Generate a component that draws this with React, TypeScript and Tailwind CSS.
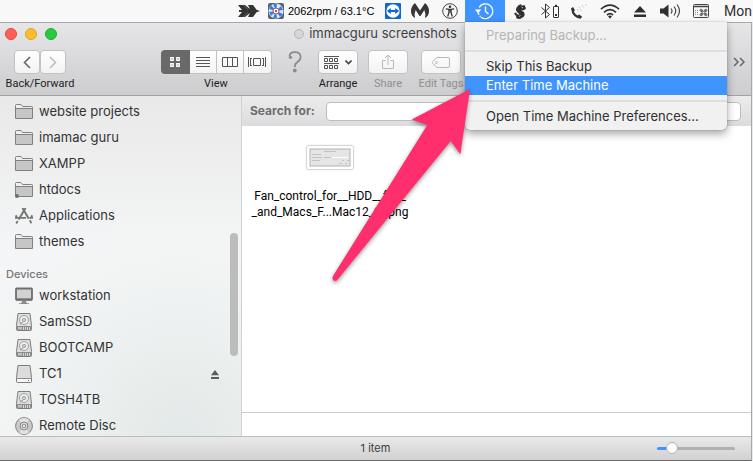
import React from "react";

type IconProps = { children: React.ReactNode; w: number; h: number; className?: string };

function Svg({ children, w, h, className = "" }: IconProps) {
  return (
    <svg width={w} height={h} viewBox={`0 0 ${w} ${h}`} fill="none" className={`shrink-0 ${className}`} aria-hidden="true">
      {children}
    </svg>
  );
}

function FolderIcon({ badge = false }: { badge?: boolean }) {
  return (
    <Svg w={18} h={16}>
      <path d="M.5 14.5V1.500Q.5.500 1.500.500H6l1.600 2h9.100q.8 0 .8.8v11.200z" fill="#eeeeee" stroke="#808080" />
      <path d="M1 5h16v9H1z" fill="#c6c6c6" />
      <path d="M.5 4.500h17" stroke="#808080" />
      {badge && <circle cx="2" cy="14" r="1.900" fill="#6c6c6c" />}
    </Svg>
  );
}

function AppsIcon() {
  return (
    <Svg w={18} h={16}>
      <path d="M7.500 0l6.300 10.800M10.500 0L3.700 11.500" stroke="#757575" strokeWidth="2" />
      <path d="M0 9.800h11M14.500 9.800H18M14.700 12.300l1.800 3M2.700 13l-1.500 2.500M.5 7.500l1.500 1.500M17.500 7.500L16 9" stroke="#757575" strokeWidth="1.800" />
    </Svg>
  );
}

function MonitorIcon() {
  return (
    <Svg w={18} h={18}>
      <rect x="1" y="1.500" width="16" height="11" rx=".6" fill="#d2d2d2" stroke="#6f6f6f" strokeWidth="1.800" />
      <path d="M1 12.700h16" stroke="#6f6f6f" strokeWidth="2" />
      <path d="M7 14h4l.7 2.300H14V17H4v-.7h2.400z" fill="#8b8b8b" />
    </Svg>
  );
}

function DriveIcon() {
  return (
    <Svg w={18} h={18}>
      <path d="M3 .5h12l1.500 12v4q0 1-1 1h-13q-1 0-1-1v-4z" fill="#dedede" stroke="#7d7d7d" />
      <path d="M1.500 13h15v4h-15z" fill="#8d8d8d" />
      <path d="M8.500 14v3M10.500 14v3M12.500 14v3M14.500 14v3" stroke="#d6d6d6" />
      <path d="M3 14h4v2.500H3z" fill="#c2c2c2" />
      <circle cx="9" cy="7" r="4.500" fill="#ededed" stroke="#a0a0a0" />
      <circle cx="9" cy="7" r="1.500" stroke="#929292" />
      <path d="M5 11l3-2" stroke="#929292" />
    </Svg>
  );
}

function CapsuleIcon() {
  return (
    <Svg w={18} h={18}>
      <path d="M3 .5h12l1.500 12v4q0 1-1 1h-13q-1 0-1-1v-4z" fill="#dcdcdc" stroke="#7d7d7d" />
      <path d="M2 14h14v3H2z" fill="#f6f6f6" />
      <path d="M1.500 13.500h15" stroke="#8d8d8d" />
      <path d="M13 15.500h1" stroke="#666" />
    </Svg>
  );
}

function DiscIcon() {
  return (
    <Svg w={18} h={18}>
      <circle cx="9" cy="9" r="8.400" fill="#cacaca" stroke="#7f7f7f" />
      <path d="M9 9L4 2.500Q9-.5 14 2.500zM9 9L4 15.500Q9 18.500 14 15.500z" fill="#e3e3e3" />
      <circle cx="9" cy="9" r="4" fill="#d9d9d9" stroke="#8a8a8a" />
      <circle cx="9" cy="9" r="1.800" fill="#eee" stroke="#8a8a8a" />
    </Svg>
  );
}

function EjectIcon({ small = false }: { small?: boolean }) {
  return (
    <svg width={small ? 8 : 12} height={small ? 9 : 11} viewBox="0 0 12 11" preserveAspectRatio="none" aria-hidden="true">
      <path d="M6 0l6 6.500H0zM0 8.500h12V11H0z" fill={small ? "#5c5c5c" : "#2f2f2f"} />
    </svg>
  );
}

const favourites = [
  { name: "website projects", icon: <FolderIcon /> },
  { name: "imamac guru", icon: <FolderIcon /> },
  { name: "XAMPP", icon: <FolderIcon /> },
  { name: "htdocs", icon: <FolderIcon badge /> },
  { name: "Applications", icon: <AppsIcon /> },
  { name: "themes", icon: <FolderIcon /> },
];

const devices = [
  { name: "workstation", icon: <MonitorIcon /> },
  { name: "SamSSD", icon: <DriveIcon /> },
  { name: "BOOTCAMP", icon: <DriveIcon /> },
  { name: "TC1", icon: <CapsuleIcon />, eject: true },
  { name: "TOSH4TB", icon: <DriveIcon /> },
  { name: "Remote Disc", icon: <DiscIcon /> },
];

function SidebarRow({ name, icon, eject }: { name: string; icon: React.ReactNode; eject?: boolean }) {
  return (
    <li className="flex h-[26px] items-center pr-[22px] pl-[15px]">
      <button className="flex min-w-0 flex-1 items-center gap-[6px] text-left">
        {icon}
        <span>{name}</span>
      </button>
      {eject && (
        <button aria-label={`Eject ${name}`}>
          <EjectIcon small />
        </button>
      )}
    </li>
  );
}

function MenuSeparator() {
  return (
    <div role="separator" className="flex h-3 items-center">
      <div className="h-[2px] w-full bg-[#dedede]" />
    </div>
  );
}

function TimeMachineMenu() {
  return (
    <div role="menu" className="absolute top-full left-0 z-20 w-[262px] rounded-b-[5px] bg-[#f1f1f1] py-1 font-[Inter,sans-serif] text-[13px] leading-[19px] text-[#303030] shadow-[0_4px_9px_rgba(0,0,0,0.35),0_0_1px_rgba(0,0,0,0.5)]">
      <button role="menuitem" disabled className="block w-full px-[21px] text-left text-[#b5b5b5]">Preparing Backup...</button>
      <MenuSeparator />
      <button role="menuitem" className="block w-full px-[21px] text-left">Skip This Backup</button>
      <button role="menuitem" className="block w-full bg-[#4094ff] px-[21px] text-left text-white">Enter Time Machine</button>
      <MenuSeparator />
      <button role="menuitem" className="block w-full px-[21px] text-left whitespace-nowrap">Open Time Machine Preferences...</button>
    </div>
  );
}

const cell = "flex h-full shrink-0 items-center justify-center";

function MenuBar() {
  return (
    <header className="flex h-[22px] items-center justify-end bg-[#f8f8f8]">
      <button aria-label="Arrow" className={`${cell} w-[31px]`}>
        <Svg w={22} h={14}>
          <path d="M0 1h7l5 4-2-4h5l3.500 4.700L22 7l-3.500 1.300L15 13h-5l2-4-5 4H0l4-5H1V6h3z" fill="#333" />
          <path d="M5 1l5 4.500M5 13l5-4.500" stroke="#777" strokeWidth=".6" />
        </Svg>
      </button>
      <button className="flex h-full shrink-0 items-center">
        <span className={`${cell} w-6`}>
          <Svg w={16} h={16}>
            <rect width="16" height="16" rx="2" fill="#5e6066" />
            <circle cx="8" cy="8" r="7.500" fill="#dcecff" />
            <path d="M8 8L5 1h4zM8 8l5-5 2 4zM8 8l7 3-3 3zM8 8l1 7H5zM8 8l-5 5-2-4zM8 8L1 6l2-4z" fill="#2f83e6" />
            <circle cx="8" cy="8" r="3" fill="#fff" stroke="#c44" />
            <circle cx="8" cy="8" r="1" fill="#444" />
          </Svg>
        </span>
        <span className="w-[92px] text-left font-['Liberation_Sans',sans-serif] text-[11px] whitespace-nowrap text-black">2062rpm / 63.1°C</span>
      </button>
      <button aria-label="Remote control" className={`${cell} w-[25px]`}>
        <Svg w={16} h={16}>
          <rect width="16" height="16" rx="1" fill="#0d67d8" />
          <circle cx="8" cy="8" r="6.700" fill="#fff" />
          <path d="M1.800 8l4-3v2h4.400V5l4 3-4 3V9H5.800v2z" fill="#0d67d8" />
        </Svg>
      </button>
      <button aria-label="Malware scanner" className={`${cell} w-[30px]`}>
        <Svg w={18} h={16}>
          <path d="M4 0L9 7.500 14 0q4 3.500 4 8 0 5-4 7 1.300-4-.7-8L9.500 13h-1L4.700 7q-2 4-.7 8-4-2-4-7 0-4.500 4-8z" fill="#363636" />
        </Svg>
      </button>
      <button aria-label="Accessibility" className={`${cell} w-[30px]`}>
        <Svg w={16} h={16}>
          <circle cx="8" cy="8" r="7.300" stroke="#444" />
          <circle cx="8" cy="3.700" r="1.300" fill="#333" />
          <path d="M3.800 5.800L7 6.300h2l3.200-.5M8 6v3.500" stroke="#333" strokeWidth="1.300" />
          <path d="M7 6v3.500l-1.300 4M9 6v3.500l1.300 4" stroke="#333" strokeWidth="1.300" />
        </Svg>
      </button>
      <div className="relative h-full shrink-0">
        <button aria-label="Time Machine" className={`${cell} w-10 bg-[#4094ff]`}>
          <Svg w={20} h={18}>
            <path d="M4.100 5.300A7.400 7.400 0 1 1 6 15.200" stroke="#fff" strokeWidth="1.300" />
            <path d="M3.100 8.200a7.500 7.500 0 0 0 2.500 6.500" stroke="#fff" strokeWidth="1.500" strokeDasharray="1.500 1.500" />
            <path d="M0 7.500h6.300L3 11.500z" fill="#fff" />
            <path d="M10.500 4.500v5l3 2.500" stroke="#fff" strokeWidth="1.300" />
          </Svg>
        </button>
        <TimeMachineMenu />
      </div>
      <button aria-label="Scripts" className={`${cell} w-[29px]`}>
        <Svg w={12} h={15}>
          <path d="M3 3Q4.500.5 7 .2l1 1.600L10.500 1 12 4.500Q10 7 7 6.500l3 1.500q1.500 2.500-.5 5L6 15l-3.500-.5L2 12 0 9.500l1.500-1L4 10.800l1.500-.5L3 8Q1 5.500 3 3z" fill="#303030" />
          <path d="M7.500 3l1.500 1M5 12.500l1.500-1" stroke="#f8f8f8" strokeWidth=".7" />
        </Svg>
      </button>
      <button aria-label="Bluetooth" className={`${cell} w-[31px]`}>
        <Svg w={18} h={16}>
          <path d="M.5 4.500l8 7-4 3.500V1l4 3.500-8 7" stroke="#333" />
          <rect x="12.500" y="3.500" width="5" height="11" rx=".5" stroke="#333" />
          <path d="M14 2.500h2" stroke="#333" strokeWidth="1.500" />
          <path d="M14 11h2v2h-2z" fill="#333" />
        </Svg>
      </button>
      <button aria-label="Phone" className={`${cell} w-[29px]`}>
        <Svg w={17} h={16}>
          <path d="M0 5.500L2 4l2 3.300L2.800 8.500q1.200 2.500 3.700 4l1.700-1 3 2.200-1.700 2Q1 14.500 0 5.500z" fill="#333" />
          <path d="M6 6l2 3M8 4l2.500 4M11 2l2 3M14 1l2 2" stroke="#bbb" strokeDasharray="1 1" />
        </Svg>
      </button>
      <button aria-label="Wi-Fi" className={`${cell} w-[31px]`}>
        <Svg w={20} h={15}>
          <path d="M1 5.200q9-8 18 0M4 8.300q6-5.500 12 0M7 11q3-2.600 6 0" stroke="#303030" strokeWidth="1.700" />
          <path d="M8 12.300q2-1.500 4 0l-2 2.500z" fill="#303030" />
        </Svg>
      </button>
      <button aria-label="Eject" className={`${cell} w-[30px]`}>
        <EjectIcon />
      </button>
      <button aria-label="Volume" className={`${cell} w-[31px]`}>
        <Svg w={21} h={14}>
          <path d="M0 4.500h3.500L8.500.5v13L3.500 9.500H0z" fill="#303030" />
          <path d="M11 4.500q2 2.500 0 5M14 2.500q3.500 4.500 0 9M17 .5q5 6.500 0 13" stroke="#444" strokeWidth="1.200" />
        </Svg>
      </button>
      <button aria-label="Input menu" className={`${cell} w-[29px]`}>
        <Svg w={16} h={14}>
          <rect x=".5" y=".5" width="15" height="13" rx="1" stroke="#444" />
          <path d="M1 2.500h14" stroke="#444" strokeWidth="1.500" />
          <path d="M2 6.500h3M2 8.500h3M2 10.500h3" stroke="#888" strokeDasharray="1 1" />
          <path d="M9 5.500v6M12 5.500v6M7.500 7.200h6M7.500 9.800h6" stroke="#444" strokeWidth=".8" />
          <circle cx="8" cy="6.200" r="1" stroke="#444" strokeWidth=".8" />
          <circle cx="13" cy="6.200" r="1" stroke="#444" strokeWidth=".8" />
          <circle cx="8" cy="10.800" r="1" stroke="#444" strokeWidth=".8" />
          <circle cx="13" cy="10.800" r="1" stroke="#444" strokeWidth=".8" />
        </Svg>
      </button>
      <button className="h-full w-[38px] shrink-0 pl-[9px] text-left text-[14px]">Mon</button>
    </header>
  );
}

const face = "flex h-6 items-center justify-center border border-[#c3c3c3] bg-gradient-to-b from-white to-[#f3f3f3]";

function Tool({ label, width, muted, children }: { label: string; width: string; muted?: boolean; children: React.ReactNode }) {
  return (
    <div className={`flex shrink-0 flex-col items-center ${width}`}>
      <div className="flex">{children}</div>
      <span className={`mt-[2px] text-[11px] leading-4 whitespace-nowrap ${muted ? "text-[#8f8f8f]" : "text-[#1d1d1d]"}`}>{label}</span>
    </div>
  );
}

function Toolbar() {
  return (
    <div className="h-[73px] rounded-t-[5px] border-b border-[#a2a2a2] bg-gradient-to-b from-[#e6e6e8] to-[#cdcdcf]">
      <div className="flex h-[22px] items-center">
        <div className="flex w-16 gap-2 pl-[5px]">
          <button aria-label="Close" className="size-3 rounded-full border border-[#e2463f] bg-[#ff5f57]" />
          <button aria-label="Minimize" className="size-3 rounded-full border border-[#e0a02c] bg-[#ffbd2e]" />
          <button aria-label="Zoom" className="size-3 rounded-full border border-[#20ab33] bg-[#28ca42]" />
        </div>
        <h1 className="flex flex-1 items-center justify-center gap-[5px] font-[Inter,sans-serif] text-[13px] text-[#3f3f3f]">
          <span className="size-[10px] rounded-full border border-[#b5b5b5] bg-[#d6d6d6]" />
          immacguru screenshots
        </h1>
        <div className="w-16" />
      </div>
      <div className="flex items-start pt-[5px] pl-1">
        <Tool label="Back/Forward" width="w-[72px]">
          <button aria-label="Back" className={`${face} w-[26px] rounded-[4px]`}>
            <Svg w={8} h={13}><path d="M7 1L1.500 6.500 7 12" stroke="#666" strokeWidth="1.600" /></Svg>
          </button>
          <button aria-label="Forward" className={`${face} w-[26px] rounded-[4px]`}>
            <Svg w={8} h={13}><path d="M1 1l5.500 5.500L1 12" stroke="#bcbcbc" strokeWidth="1.500" /></Svg>
          </button>
        </Tool>
        <div className="w-[83px]" />
        <Tool label="View" width="w-[114px]">
          <button aria-label="Icons" className="flex h-6 w-[29px] items-center justify-center rounded-l-[4px] bg-[#696969]">
            <Svg w={10} h={10}><path d="M.75.75h2.500v2.500H.75zM6.750.75h2.500v2.500h-2.500zM.75 6.750h2.500v2.500H.75zM6.750 6.750h2.500v2.500h-2.500z" stroke="#fff" strokeWidth="1.300" /></Svg>
          </button>
          <button aria-label="List" className={`${face} w-[27px] border-l-0`}>
            <Svg w={14} h={10}><path d="M0 .5h14M0 3.500h14M0 6.500h14M0 9.500h14" stroke="#555" /></Svg>
          </button>
          <button aria-label="Columns" className={`${face} w-[27px] border-l-0`}>
            <Svg w={16} h={10}><path d="M.5.5h15v9H.5zM5.500.5v9M10.500.5v9" stroke="#555" /></Svg>
          </button>
          <button aria-label="Cover flow" className={`${face} w-[28px] rounded-r-[4px] border-l-0`}>
            <Svg w={18} h={10}><path d="M.5 0v10M2.500 1v8M5.500 1.500h7v7h-7zM15.500 1v8M17.500 0v10M2.500 1.500h1.500M2.500 8.500h1.500M15.500 1.500H14M15.500 8.500H14" stroke="#555" /></Svg>
          </button>
        </Tool>
        <button aria-label="Help" className="ml-[15px] flex h-6 w-[14px] items-center justify-center">
          <Svg w={14} h={22}>
            <path d="M1.500 5.500Q1.500 1.200 7 1.200T12.600 6Q12.600 9 9.500 11T6.800 16" stroke="#8b8b8d" strokeWidth="1.700" />
            <circle cx="2.500" cy="6.300" r="1.600" fill="#8b8b8d" />
            <circle cx="6.800" cy="19.500" r="1.900" fill="#8b8b8d" />
          </Svg>
        </button>
        <div className="flex gap-[6px] pl-[14px]">
          <Tool label="Arrange" width="w-[44px]">
            <button aria-label="Arrange" className={`${face} w-10 gap-[6px] rounded-[4px]`}>
              <Svg w={15} h={13}><path d="M0 .5h15M0 7.500h15M.5 2.500h3v3h-3zM5.500 2.500h3v3h-3zM10.500 2.500h3v3h-3zM.5 9.500h3v3h-3zM5.500 9.500h3v3h-3zM10.500 9.500h3v3h-3z" stroke="#555" /></Svg>
              <Svg w={7} h={5}><path d="M.5.500l3 3 3-3" stroke="#444" strokeWidth="1.600" /></Svg>
            </button>
          </Tool>
          <Tool label="Share" width="w-[44px]" muted>
            <button aria-label="Share" disabled className={`${face} w-10 rounded-[4px]`}>
              <Svg w={12} h={16}><path d="M3.500 6.500h-3v8h11v-8h-3M6 11V1.500M3 4l3-3 3 3" stroke="#b8b8b8" /></Svg>
            </button>
          </Tool>
          <Tool label="Edit Tags" width="w-[50px]" muted>
            <button aria-label="Edit Tags" disabled className={`${face} w-10 rounded-[4px]`}>
              <Svg w={18} h={11}><path d="M5 .5h11q1.500 0 1.500 1.500v7q0 1.500-1.500 1.500H5L.7 6.500q-.7-1 0-2z" stroke="#b8b8b8" /><circle cx="4.500" cy="5.500" r="1" stroke="#b8b8b8" /></Svg>
            </button>
          </Tool>
        </div>
        <button aria-label="More tools" className="mr-[6px] ml-auto flex h-6 items-center">
          <Svg w={12} h={10}><path d="M1 1l4 4-4 4M7 1l4 4-4 4" stroke="#666" strokeWidth="1.500" /></Svg>
        </button>
      </div>
    </div>
  );
}

function Sidebar() {
  return (
    <nav className="relative w-[242px] shrink-0 overflow-hidden border-r border-[#d2d2d2] bg-[radial-gradient(circle_at_75%_100%,#e3e9e8_0,#f3f5f5_48%,transparent_60%),linear-gradient(#e9e9e9,#f4f5f6_45%,#f5f5f6)] pt-[3px] font-[Inter,sans-serif] text-[13px] text-[#333]">
      <ul>{favourites.map((f) => <SidebarRow key={f.name} {...f} />)}</ul>
      <h2 className="flex h-7 items-end pb-[1px] pl-[6px] text-[11px] font-medium text-[#777]">Devices</h2>
      <ul>{devices.map((d) => <SidebarRow key={d.name} {...d} />)}</ul>
      <div className="absolute top-[137px] right-[3px] h-[123px] w-2 rounded-full bg-[#bcbcbc]" />
    </nav>
  );
}

function Content() {
  return (
    <main className="flex min-w-0 flex-1 flex-col bg-white">
      <div className="flex h-[30px] shrink-0 items-center gap-[11px] bg-gradient-to-b from-[#ececec] to-[#dcdcde] pr-[10px] pl-[8px]">
        <label htmlFor="search" className="shrink-0 font-[Inter,sans-serif] text-[12px] font-bold text-[#6d6d6d]">Search for:</label>
        <input id="search" className="h-[19px] min-w-0 flex-1 rounded-[4px] border border-[#bdbdbd] bg-white px-2 text-[13px]" />
      </div>
      <div className="flex-1 px-[7px] pt-5">
        <figure className="flex w-[162px] flex-col items-center">
          <div className="h-[23px] w-[46px] rounded-[1px] bg-white p-[2px] shadow-[0_0_2px_rgba(0,0,0,0.6)]">
            <Svg w={42} h={19}>
              <rect x="1" y="1" width="40" height="17" fill="#e5e5e5" stroke="#b3b3b3" />
              <path d="M15 3.500h12M3 6.500h9M3 9.500h10M15 9.500h7M3 12.500h8M33 12.500h2M38 12.500h2M30 15.500h3M36 15.500h2" stroke="#c3c3c3" />
              <path d="M23 9.500h16" stroke="#fff" />
            </Svg>
          </div>
          <figcaption className="mt-[19px] text-center text-[12px] leading-4 whitespace-nowrap text-black">
            Fan_control_for__HDD__fan_
            <br />
            _and_Macs_F...Mac12_2).png
          </figcaption>
        </figure>
      </div>
      <div className="h-6 shrink-0 border-t border-[#cbcbcb]" />
    </main>
  );
}

function StatusBar() {
  return (
    <footer className="flex h-6 shrink-0 items-center border-t border-[#bcbcbc] bg-gradient-to-b from-[#e9e9e9] to-[#d1d1d3] text-[#3d3d3d]">
      <div className="flex-1" />
      <span className="font-[Inter,sans-serif] text-[11px]">1 item</span>
      <div className="flex flex-1 justify-end">
        <input
          type="range"
          aria-label="Icon size"
          defaultValue={14}
          className="mr-4 h-3 w-[78px] appearance-none bg-transparent [&::-webkit-slider-runnable-track]:h-[3px] [&::-webkit-slider-runnable-track]:rounded-full [&::-webkit-slider-runnable-track]:bg-[linear-gradient(90deg,#4094ff_20%,#b1b1b1_20%)] [&::-webkit-slider-thumb]:-mt-[5px] [&::-webkit-slider-thumb]:size-3 [&::-webkit-slider-thumb]:appearance-none [&::-webkit-slider-thumb]:rounded-full [&::-webkit-slider-thumb]:border [&::-webkit-slider-thumb]:border-[#b0b0b0] [&::-webkit-slider-thumb]:bg-white"
        />
      </div>
    </footer>
  );
}

function PointerArrow() {
  return (
    <svg className="pointer-events-none absolute top-[84px] left-[328px] z-30 drop-shadow-[0_2px_2px_rgba(0,0,0,0.4)]" width="148" height="202" viewBox="328 84 148 202" aria-hidden="true">
      <path d="M470 89L411.700 119.500l15.600 5.500L333 276q-1.500 4 1.500 5 2 .5 4-2.500L450.700 141l9.600 13.300z" fill="#ff2e6c" />
    </svg>
  );
}

export default function App() {
  return (
    <div className="relative flex h-screen flex-col overflow-hidden bg-[#e9eaeb] font-[Roboto,sans-serif] text-[#303030]">
      <MenuBar />
      <section className="mr-[1px] flex min-h-0 flex-1 flex-col border-t border-r border-b border-t-[#a8a8a8] border-r-[#a8a8a8] border-b-[#6a6a6a]">
        <Toolbar />
        <div className="flex min-h-0 flex-1">
          <Sidebar />
          <Content />
        </div>
        <StatusBar />
      </section>
      <PointerArrow />
    </div>
  );
}
